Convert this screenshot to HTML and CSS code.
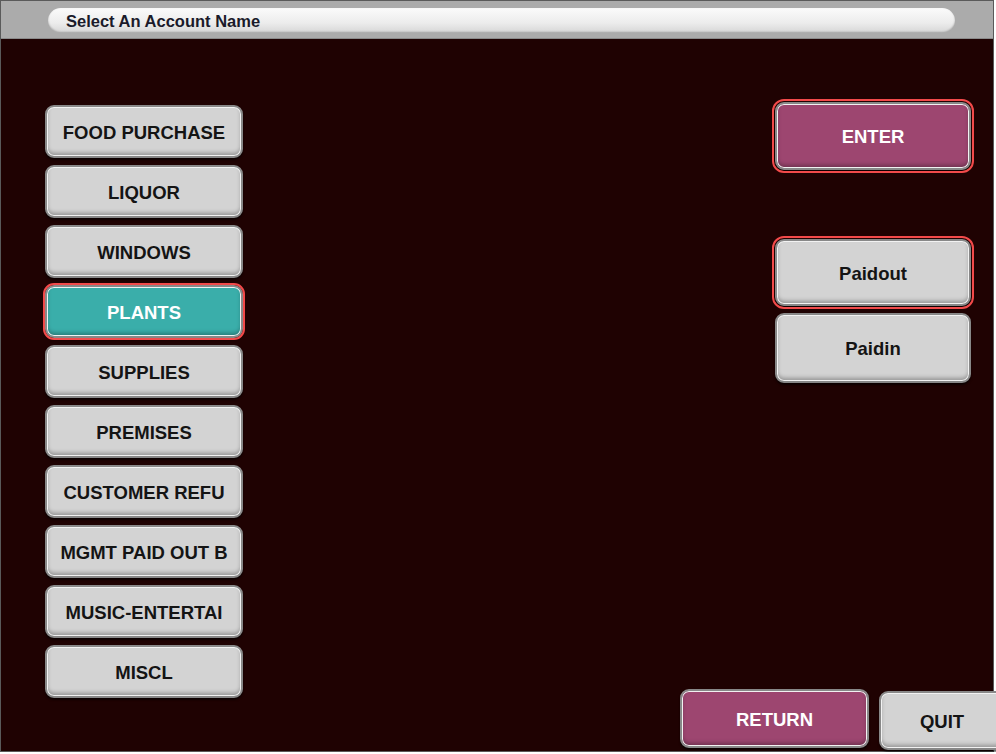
FILE: index.html
```html
<!DOCTYPE html>
<html lang="en">
  <head>
    <meta charset="UTF-8" />
    <title>Select An Account Name</title>
    <link rel="stylesheet" href="styles.css">
  </head>
  <body>
    <div class="frame">
      <div class="header">
        <div class="title-pill">Select An Account Name</div>
      </div>

      <div class="content">
        <div class="account-list">
          <button class="btn">FOOD PURCHASE</button>
          <button class="btn">LIQUOR</button>
          <button class="btn">WINDOWS</button>
          <button class="btn btn-teal selected">PLANTS</button>
          <button class="btn">SUPPLIES</button>
          <button class="btn">PREMISES</button>
          <button class="btn">CUSTOMER REFU</button>
          <button class="btn">MGMT PAID OUT B</button>
          <button class="btn">MUSIC-ENTERTAI</button>
          <button class="btn">MISCL</button>
        </div>

        <div class="side">
          <button class="btn btn-plum btn-enter selected">ENTER</button>
          <button class="btn btn-side btn-paidout selected">Paidout</button>
          <button class="btn btn-side btn-paidin">Paidin</button>

          <div class="footer">
            <button class="btn btn-plum btn-return">RETURN</button>
            <button class="btn btn-quit">QUIT</button>
          </div>
        </div>
      </div>
    </div>
  </body>
</html>
```

FILE: styles.css
```css
body {
  margin: 0;
  padding: 0;
  background-color: #ffffff;
  font-family: "Liberation Sans", Arial, sans-serif;
}

.frame {
  width: 994px;
  height: 752px;
  box-sizing: border-box;
  border: 1px solid #5a5a5a;
  background-color: #1f0202;
  display: flex;
  flex-direction: column;
}

.header {
  height: 38px;
  box-sizing: border-box;
  background-color: #ababab;
  border-bottom: 1px solid #8a8a8a;
  padding: 7px 38px 0 47px;
}

.title-pill {
  height: 25px;
  box-sizing: border-box;
  border-radius: 13px;
  background: linear-gradient(#fbfbfb, #ececec 60%, #d6d6d6);
  box-shadow: inset 0 -1px 2px rgba(0, 0, 0, 0.25);
  padding: 4px 0 0 18px;
  font-size: 16.5px;
  font-weight: bold;
  color: #1a1a2a;
}

.content {
  flex: 1;
  display: flex;
  min-height: 0;
}

.account-list {
  display: flex;
  flex-direction: column;
  gap: 7px;
  padding: 66px 0 0 44px;
}

.btn {
  box-sizing: border-box;
  width: 198px;
  height: 53px;
  padding: 2px 0 0;
  border: 2px solid #888888;
  border-radius: 9px;
  background-color: #d3d3d3;
  box-shadow: inset 0 0 0 1px #f2f2f2, inset 0 -3px 4px rgba(0, 0, 0, 0.3),
    0 2px 2px rgba(0, 0, 0, 0.6);
  font-family: "Liberation Sans", Arial, sans-serif;
  font-size: 18.5px;
  font-weight: bold;
  color: #141414;
  white-space: nowrap;
  overflow: hidden;
  cursor: pointer;
}

.btn-teal {
  background-color: #3aaeaa;
  color: #ffffff;
}

.btn-plum {
  background-color: #9d4670;
  color: #ffffff;
}

.selected {
  outline: 2px solid #f24a4a;
  outline-offset: 0;
}

.side {
  margin-left: auto;
  width: 313px;
  box-sizing: border-box;
  padding: 63px 22px 1px 0;
  display: flex;
  flex-direction: column;
  align-items: flex-end;
}

.btn-enter {
  width: 196px;
  height: 68px;
  outline-offset: 1px;
}

.btn-side {
  width: 196px;
  height: 67px;
}

.btn-paidout {
  margin-top: 69px;
  margin-bottom: 7px;
  outline-offset: 1px;
}

.btn-paidin {
  height: 70px;
}

.footer {
  margin-top: auto;
  align-self: flex-start;
  display: flex;
  align-items: flex-end;
  gap: 10px;
}

.btn-return {
  width: 189px;
  height: 59px;
  margin-bottom: 2px;
}

.btn-quit {
  width: 126px;
  height: 59px;
  flex-shrink: 0;
}
```
